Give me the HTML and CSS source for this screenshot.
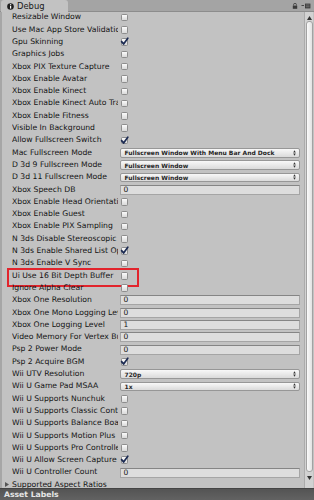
FILE: index.html
```html
<!DOCTYPE html>
<html lang="en">

<head>
    <meta charset="UTF-8">
    <title>Debug</title>
    <link rel="stylesheet" href="styles.css">
</head>

<body>
    <div class="window">
        <div class="tabbar">
            <div class="tab">
                <svg class="tab-icon" width="7" height="7" viewBox="0 0 7 7">
                    <circle cx="3.5" cy="3.5" r="3.3" fill="#1e1e1e"/>
                    <rect x="3" y="1.2" width="1.2" height="1" fill="#fff"/>
                    <rect x="3" y="2.8" width="1.2" height="2.8" fill="#fff"/>
                </svg>
                Debug
            </div>
            <div class="tab-tools">
                <svg width="6" height="6" viewBox="0 0 6 6">
                    <path d="M1.6 2.6 V1.7 a1.4 1.4 0 0 1 2.8 0 V2.6" fill="none" stroke="#3a3a3a" stroke-width="0.8"/>
                    <rect x="0.8" y="2.6" width="4.4" height="3.2" fill="#3a3a3a"/>
                </svg>
                <svg width="10" height="6" viewBox="0 0 10 6">
                    <path d="M0.5 2.5 H3" stroke="#3a3a3a" stroke-width="0.9"/>
                    <rect x="4" y="0.6" width="5.4" height="4.8" fill="#3a3a3a"/>
                    <path d="M4.8 2 H8.6 M4.8 3.8 H8.6" stroke="#9a9a9a" stroke-width="0.6"/>
                </svg>
            </div>
        </div>

        <div class="body">
            <div class="inspector">
                <div class="list">
                    <div class="row"><span class="label">Resizable Window</span><span class="toggle"></span></div>
                    <div class="row"><span class="label">Use Mac App Store Validation</span><span class="toggle"></span></div>
                    <div class="row"><span class="label">Gpu Skinning</span><span class="toggle checked"><svg viewBox="0 0 9 9"><path d="M1.6 4.6 L3.6 7 L7.8 1.2"/></svg></span></div>
                    <div class="row"><span class="label">Graphics Jobs</span><span class="toggle"></span></div>
                    <div class="row"><span class="label">Xbox PIX Texture Capture</span><span class="toggle"></span></div>
                    <div class="row"><span class="label">Xbox Enable Avatar</span><span class="toggle"></span></div>
                    <div class="row"><span class="label">Xbox Enable Kinect</span><span class="toggle"></span></div>
                    <div class="row"><span class="label">Xbox Enable Kinect Auto Tracking</span><span class="toggle"></span></div>
                    <div class="row"><span class="label">Xbox Enable Fitness</span><span class="toggle"></span></div>
                    <div class="row"><span class="label">Visible In Background</span><span class="toggle"></span></div>
                    <div class="row"><span class="label">Allow Fullscreen Switch</span><span class="toggle checked"><svg viewBox="0 0 9 9"><path d="M1.6 4.6 L3.6 7 L7.8 1.2"/></svg></span></div>
                    <div class="row"><span class="label">Mac Fullscreen Mode</span><span class="popup">Fullscreen Window With Menu Bar And Dock<svg class="arrows" viewBox="0 0 3 6"><path d="M1.5 0.3 L2.8 2.4 H0.2 Z M1.5 5.7 L2.8 3.6 H0.2 Z"/></svg></span></div>
                    <div class="row"><span class="label">D 3d 9 Fullscreen Mode</span><span class="popup">Fullscreen Window<svg class="arrows" viewBox="0 0 3 6"><path d="M1.5 0.3 L2.8 2.4 H0.2 Z M1.5 5.7 L2.8 3.6 H0.2 Z"/></svg></span></div>
                    <div class="row"><span class="label">D 3d 11 Fullscreen Mode</span><span class="popup">Fullscreen Window<svg class="arrows" viewBox="0 0 3 6"><path d="M1.5 0.3 L2.8 2.4 H0.2 Z M1.5 5.7 L2.8 3.6 H0.2 Z"/></svg></span></div>
                    <div class="row"><span class="label">Xbox Speech DB</span><span class="textfield">0</span></div>
                    <div class="row"><span class="label">Xbox Enable Head Orientation</span><span class="toggle"></span></div>
                    <div class="row"><span class="label">Xbox Enable Guest</span><span class="toggle"></span></div>
                    <div class="row"><span class="label">Xbox Enable PIX Sampling</span><span class="toggle"></span></div>
                    <div class="row"><span class="label">N 3ds Disable Stereoscopic View</span><span class="toggle"></span></div>
                    <div class="row"><span class="label">N 3ds Enable Shared List Opt</span><span class="toggle checked"><svg viewBox="0 0 9 9"><path d="M1.6 4.6 L3.6 7 L7.8 1.2"/></svg></span></div>
                    <div class="row"><span class="label">N 3ds Enable V Sync</span><span class="toggle"></span></div>
                    <div class="row marked"><span class="label">Ui Use 16 Bit Depth Buffer</span><span class="toggle"></span></div>
                    <div class="row"><span class="label">Ignore Alpha Clear</span><span class="toggle"></span></div>
                    <div class="row"><span class="label">Xbox One Resolution</span><span class="textfield">0</span></div>
                    <div class="row"><span class="label">Xbox One Mono Logging Level</span><span class="textfield">0</span></div>
                    <div class="row"><span class="label">Xbox One Logging Level</span><span class="textfield">1</span></div>
                    <div class="row"><span class="label">Video Memory For Vertex Buffers</span><span class="textfield">0</span></div>
                    <div class="row"><span class="label">Psp 2 Power Mode</span><span class="textfield">0</span></div>
                    <div class="row"><span class="label">Psp 2 Acquire BGM</span><span class="toggle checked"><svg viewBox="0 0 9 9"><path d="M1.6 4.6 L3.6 7 L7.8 1.2"/></svg></span></div>
                    <div class="row"><span class="label">Wii UTV Resolution</span><span class="popup">720p<svg class="arrows" viewBox="0 0 3 6"><path d="M1.5 0.3 L2.8 2.4 H0.2 Z M1.5 5.7 L2.8 3.6 H0.2 Z"/></svg></span></div>
                    <div class="row"><span class="label">Wii U Game Pad MSAA</span><span class="popup">1x<svg class="arrows" viewBox="0 0 3 6"><path d="M1.5 0.3 L2.8 2.4 H0.2 Z M1.5 5.7 L2.8 3.6 H0.2 Z"/></svg></span></div>
                    <div class="row"><span class="label">Wii U Supports Nunchuk</span><span class="toggle"></span></div>
                    <div class="row"><span class="label">Wii U Supports Classic Controller</span><span class="toggle"></span></div>
                    <div class="row"><span class="label">Wii U Supports Balance Board</span><span class="toggle"></span></div>
                    <div class="row"><span class="label">Wii U Supports Motion Plus</span><span class="toggle"></span></div>
                    <div class="row"><span class="label">Wii U Supports Pro Controller</span><span class="toggle"></span></div>
                    <div class="row"><span class="label">Wii U Allow Screen Capture</span><span class="toggle checked"><svg viewBox="0 0 9 9"><path d="M1.6 4.6 L3.6 7 L7.8 1.2"/></svg></span></div>
                    <div class="row"><span class="label">Wii U Controller Count</span><span class="textfield">0</span></div>
                    <div class="row foldout">
                        <svg class="fold-arrow" width="4" height="5" viewBox="0 0 4 5"><path d="M0 0 L4 2.5 L0 5 Z"/></svg>
                        <span class="label">Supported Aspect Ratios</span>
                    </div>
                </div>
            </div>

            <div class="scrollbar">
                <div class="sb-btn"><svg width="5" height="4" viewBox="0 0 5 4"><path d="M2.5 0 L5 4 H0 Z"/></svg></div>
                <div class="thumb"></div>
                <div class="sb-btn down"><svg width="5" height="4" viewBox="0 0 5 4"><path d="M0 0 H5 L2.5 4 Z"/></svg></div>
            </div>
        </div>

        <div class="footer">Asset Labels</div>
    </div>
</body>

</html>
```

FILE: styles.css
```css
* {
    box-sizing: border-box;
}

body {
    margin: 0;
    font-family: "DejaVu Sans", Verdana, sans-serif;
    background-color: #c2c2c2;
    color: #141414;
}

.window {
    width: 314px;
    height: 500px;
    display: flex;
    flex-direction: column;
    overflow: hidden;
    background-color: #c2c2c2;
}

/* tab strip */

.tabbar {
    height: 12px;
    flex: none;
    display: flex;
    align-items: flex-end;
    background-color: #a4a4a4;
    border-bottom: 1px solid #8c8c8c;
    padding-left: 1px;
}

.tab {
    width: 67px;
    height: 12px;
    margin-bottom: -1px;
    display: flex;
    align-items: center;
    gap: 3px;
    padding-left: 6px;
    background-color: #c2c2c2;
    border-radius: 3px 3px 0 0;
    font-size: 8.4px;
    color: #1a1a1a;
}

.tab-icon {
    flex: none;
}

.tab-tools {
    margin-left: auto;
    height: 11px;
    display: flex;
    align-items: center;
    gap: 3px;
    padding-right: 3px;
}

/* inspector */

.body {
    flex: 1;
    min-height: 0;
    display: flex;
    border-left: 2px solid #a6a6a6;
}

.inspector {
    flex: 1;
    overflow: hidden;
}

.list {
    margin-top: -0.6px;
}

.row {
    position: relative;
    height: 12.3px;
    display: flex;
    align-items: center;
    padding-left: 10px;
}

.label {
    width: 106px;
    flex: none;
    overflow: hidden;
    white-space: nowrap;
    font-size: 7.7px;
    line-height: 12.3px;
}

.toggle {
    width: 7.5px;
    height: 7.5px;
    margin-left: 2.5px;
    display: flex;
    align-items: center;
    justify-content: center;
    border: 1px solid #8d8d8d;
    border-radius: 1.5px;
    background: linear-gradient(#fbfbfb, #d9d9d9);
}

.toggle svg {
    flex: none;
    width: 9px;
    height: 9px;
    margin-top: -1px;
    overflow: visible;
}

.toggle svg path {
    fill: none;
    stroke: #1b2a52;
    stroke-width: 1.7;
    stroke-linecap: round;
    stroke-linejoin: round;
}

.popup {
    width: 180.5px;
    height: 9.5px;
    margin-left: 1.5px;
    display: flex;
    align-items: center;
    justify-content: space-between;
    padding: 0 3px 0 4px;
    border: 1px solid #979797;
    border-radius: 2px;
    background: linear-gradient(#f8f8f8, #dadada);
    font-size: 6px;
    font-weight: bold;
    color: #262626;
    white-space: nowrap;
}

.arrows {
    width: 3px;
    height: 6px;
    fill: #333;
}

.textfield {
    width: 180.5px;
    height: 10px;
    margin-left: 1.5px;
    padding-left: 3px;
    border: 1px solid #a5a5a5;
    border-top-color: #858585;
    background-color: #dddddd;
    font-size: 7.5px;
    line-height: 8px;
}

/* red marker round one row */
.row.marked::after {
    content: "";
    position: absolute;
    left: 5px;
    top: -1.6px;
    width: 128px;
    height: 15px;
    border: 2px solid #e2242c;
}

.foldout {
    padding-left: 3px;
}

.fold-arrow {
    flex: none;
    margin-right: 3px;
    fill: #555;
}

.foldout .label {
    width: auto;
}

/* scrollbar */

.scrollbar {
    width: 9px;
    flex: none;
    margin-right: 1px;
    display: flex;
    flex-direction: column;
    align-items: center;
    padding-top: 2px;
    background-color: #d2d2d2;
    border-left: 1px solid #ababab;
}

.sb-btn {
    height: 7px;
    display: flex;
    align-items: center;
    justify-content: center;
    fill: #333;
}

.sb-btn.down {
    margin-top: 2px;
}

.thumb {
    width: 7px;
    height: 451px;
    border: 1px solid #a2a2a2;
    border-radius: 3px;
    background: linear-gradient(to right, #fafafa, #e2e2e2);
}

/* bottom bar */

.footer {
    height: 12px;
    flex: none;
    padding-left: 4px;
    background: linear-gradient(#545454, #626262);
    border-top: 1px solid #444;
    color: #e6e6e6;
    font-size: 7.7px;
    font-weight: bold;
    line-height: 11px;
}
```
